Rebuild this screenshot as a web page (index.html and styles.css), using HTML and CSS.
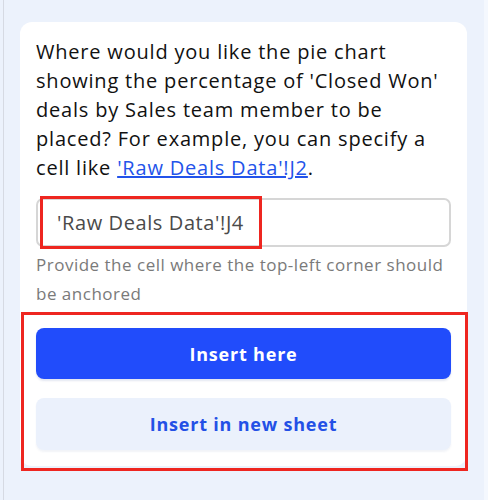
FILE: index.html
```html
<!DOCTYPE html>
<html>
<head>
<meta charset="UTF-8">
<title>Insert chart</title>
<link rel="stylesheet" href="styles.css">
</head>
<body>
<div class="page">
	<div class="card">
		<p class="question">Where would you like the pie chart showing the percentage of 'Closed Won' deals by Sales team member to be placed? For example, you can specify a cell like <a href="#" class="ref_link">'Raw Deals Data'!J2</a>.</p>

		<div class="field">
			<div class="input_box">'Raw Deals Data'!J4</div>
			<div class="mark mark_input"></div>
		</div>
		<p class="hint">Provide the cell where the top-left corner should be anchored</p>

		<div class="actions">
			<button class="btn btn_primary">Insert here</button>
			<button class="btn btn_secondary">Insert in new sheet</button>
			<div class="mark mark_actions"></div>
		</div>
	</div>
	<div class="edge"></div>
</div>
</body>
</html>
```

FILE: styles.css
```css
body {
	margin: 0px;
	padding: 0px;
	background: #ecf2fc;
	font-family: "Open Sans", "Liberation Sans", sans-serif;
	color: #111;
}

.page {
	display: flex;
	height: 500px;
	margin-left: 3px;
	border-left: 1px solid #d6dae3;
}

.card {
	width: 415px;
	margin: 22px 0px 0px 16px;
	padding: 15px 16px 15px 16px;
	height: 414px;
	background: #fff;
	border-radius: 12px;
}

.edge {
	margin-left: auto;
	width: 4px;
	background: #f4f8fe;
}

.question {
	margin: 0px;
	font-size: 20px;
	line-height: 29px;
	letter-spacing: 0.8px;
}

.ref_link {
	color: #2353ea;
}

.field {
	position: relative;
	margin-top: 16px;
}

.input_box {
	height: 45px;
	border: 2px solid #d6d6d6;
	border-radius: 7px;
	padding-left: 19px;
	font-size: 20px;
	letter-spacing: 0.6px;
	line-height: 45px;
	color: #4a4a4a;
}

.hint {
	margin: 3px 0px 0px 0px;
	font-size: 17px;
	letter-spacing: 0.5px;
	line-height: 29px;
	color: #7a7a7a;
}

.actions {
	position: relative;
	display: flex;
	flex-direction: column;
	gap: 19px;
	margin-top: 20px;
}

.btn {
	border: none;
	border-radius: 8px;
	height: 51px;
	font-family: inherit;
	font-size: 18px;
	font-weight: 700;
	letter-spacing: 0.8px;
}

.btn_primary {
	background: #214cfb;
	color: #fff;
	box-shadow: 0px 2px 2px rgba(30, 60, 140, 0.12);
}

.btn_secondary {
	height: 52px;
	background: #ebf1fc;
	color: #2350e6;
	box-shadow: 0px 2px 2px rgba(30, 60, 140, 0.06);
}

.mark {
	position: absolute;
	border: 3px solid #ee2620;
}

.mark_input {
	left: 4px;
	top: -2px;
	width: 216px;
	height: 47px;
}

.mark_actions {
	left: -15px;
	top: -16px;
	width: 441px;
	height: 153px;
}
```
